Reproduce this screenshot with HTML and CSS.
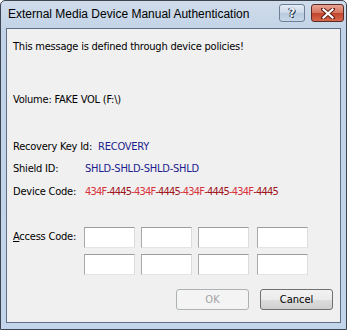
FILE: index.html
```html
<!DOCTYPE html>
<html lang="en">
<head>
    <meta charset="UTF-8">
    <title>External Media Device Manual Authentication</title>
    <link rel="stylesheet" href="styles.css">
</head>
<body>

    <div class="window">
        <div class="titlebar">
            <span class="title">External Media Device Manual Authentication</span>
            <div class="caption-buttons">
                <button class="cap help">?</button>
                <button class="cap close">
                    <svg width="14" height="11" viewBox="0 0 14 11">
                        <path d="M2 1 L12 10 M12 1 L2 10" stroke="#5a1d14" stroke-width="4" stroke-linecap="square"/>
                        <path d="M2.5 1.5 L11.5 9.5 M11.5 1.5 L2.5 9.5" stroke="#fff" stroke-width="2.2" stroke-linecap="square"/>
                    </svg>
                </button>
            </div>
        </div>

        <div class="client">
            <p class="msg">This message is defined through device policies!</p>
            <p class="volume">Volume: FAKE VOL (F:\)</p>

            <div class="info">
                <div class="row">
                    <span class="key">Recovery Key Id:</span>
                    <span class="val blue">RECOVERY</span>
                </div>
                <div class="row">
                    <span class="key fixed">Shield ID:</span>
                    <span class="val blue">SHLD-SHLD-SHLD-SHLD</span>
                </div>
                <div class="row">
                    <span class="key fixed">Device Code:</span>
                    <span class="val code"><span class="c1">434F</span><span class="c2">-4445</span><span class="c1">-434F</span><span class="c2">-4445</span><span class="c1">-434F</span><span class="c2">-4445</span><span class="c1">-434F</span><span class="c2">-4445</span></span>
                </div>
            </div>

            <div class="access">
                <label class="access-label"><u>A</u>ccess Code:</label>
                <div class="codes">
                    <input type="text"><input type="text"><input type="text"><input type="text">
                    <input type="text"><input type="text"><input type="text"><input type="text">
                </div>
            </div>

            <div class="actions">
                <button class="btn" disabled>OK</button>
                <button class="btn">Cancel</button>
            </div>
        </div>
    </div>

</body>
</html>
```
FILE: styles.css
```css
body {
    margin: 0;
    padding: 0;
    background: #fff;
    font-family: "DejaVu Sans Condensed", "DejaVu Sans", sans-serif;
}
.window {
    width: 347px;
    height: 330px;
    box-sizing: border-box;
    border: 1px solid #3b4450;
    border-radius: 5px 5px 0 0;
    background: linear-gradient(#d0dcea, #c2d3e7 30px, #c3d5ea);
    padding: 0 5px 6px 5px;
    display: flex;
    flex-direction: column;
}
.titlebar {
    height: 27px;
    display: flex;
    justify-content: space-between;
    align-items: flex-start;
}
.title {
    font-family: "Liberation Sans", Arial, sans-serif;
    font-size: 12px;
    color: #000;
    margin: 6px 0 0 2px;
}
.caption-buttons {
    display: flex;
    gap: 6px;
    margin: 3px -3px 0 0;
}
.cap {
    height: 18px;
    border: 1px solid #6e7f96;
    border-radius: 3px;
    padding: 0;
    display: flex;
    align-items: center;
    justify-content: center;
}
.help {
    width: 26px;
    background: linear-gradient(#e4ecf6, #cbd8e8 50%, #b7c9de 51%, #c8d7e9);
    font-family: "DejaVu Sans", sans-serif;
    font-weight: bold;
    font-size: 12px;
    color: #f4f7fb;
    text-shadow: 0 0 1px #27384e, 1px 1px 0 #27384e, -1px 0 0 #27384e;
}
.close {
    width: 33px;
    border-color: #5b2a22;
    background: linear-gradient(#e8a493, #d4735d 50%, #c2452c 51%, #d7674c);
}
.client {
    flex: 1;
    background: #f0f0f0;
    border: 1px solid #5d6f86;
    padding: 0 7px 0 6px;
    font-size: 11px;
    letter-spacing: -0.22px;
    color: #000;
}
.msg {
    margin: 11px 0 0 0;
    line-height: 13px;
}
.volume {
    margin: 40px 0 0 0;
    line-height: 13px;
}
.info {
    margin-top: 29px;
}
.row {
    display: flex;
    height: 22.5px;
    align-items: center;
}
.key {
    margin-right: 6px;
}
.key.fixed {
    width: 72px;
    margin-right: 0;
}
.blue {
    color: #1c1c8e;
}
.code {
    letter-spacing: -0.8px;
}
.c1 {
    color: #d8323c;
}
.c2 {
    color: #a01420;
}
.access {
    display: flex;
    margin-top: 24px;
}
.access-label {
    width: 71px;
    line-height: 20px;
}
.codes {
    display: grid;
    grid-template-columns: 51px 51px 51px 53px;
    column-gap: 6px;
    row-gap: 6px;
}
.codes input {
    width: 51px;
    height: 21px;
    box-sizing: border-box;
    margin: 0;
    border: 1px solid;
    border-color: #9c9c9c #dcdcdc #e4e4e4 #a9a9a9;
    background: #fff;
}
.codes input:nth-child(4n) {
    margin-left: 2px;
}
.actions {
    display: flex;
    justify-content: flex-end;
    gap: 11px;
    margin-top: 14px;
}
.btn {
    width: 73px;
    height: 21px;
    font-family: "DejaVu Sans Condensed", "DejaVu Sans", sans-serif;
    font-size: 11px;
    color: #000;
    border: 1px solid #707070;
    border-radius: 3px;
    background: linear-gradient(#f2f2f2, #ebebeb 50%, #dddddd 51%, #cfcfcf);
    padding: 0;
}
.btn:disabled {
    color: #a3a3a3;
    border-color: #adb2b5;
    background: #f4f4f4;
}
```
